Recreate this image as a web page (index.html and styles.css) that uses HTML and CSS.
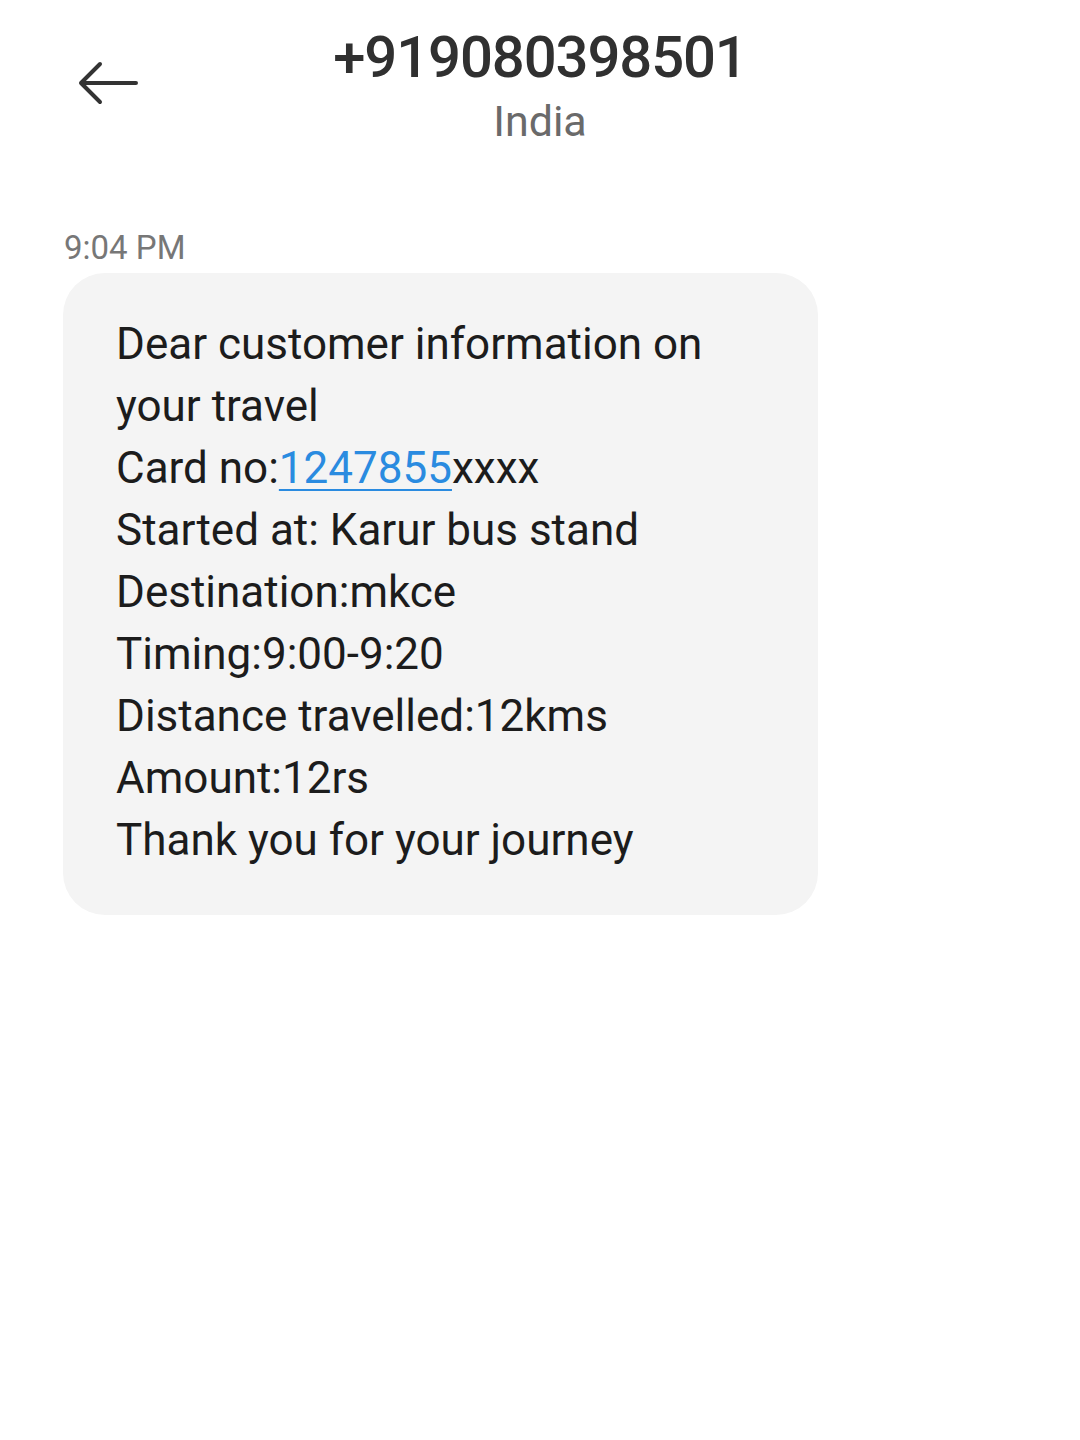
FILE: index.html
```html
<!DOCTYPE html>
<html>
<head>
<meta charset="utf-8">
<link rel="stylesheet" href="styles.css">
</head>
<body>
<header class="top">
  <div class="back">
    <svg width="60" height="44" viewBox="0 0 60 44"><path d="M58 22H3M22 3L3 22L22 41" fill="none" stroke="#333" stroke-width="4" stroke-linecap="round" stroke-linejoin="round"/></svg>
  </div>
  <div class="title">
    <div class="number">+919080398501</div>
    <div class="country">India</div>
  </div>
</header>
<main class="thread">
  <div class="time">9:04 PM</div>
  <div class="bubble">
    <p>Dear customer information on your travel</p>
    <p>Card no:<span class="link">1247855</span>xxxx</p>
    <p>Started at: Karur bus stand</p>
    <p>Destination:mkce</p>
    <p>Timing:9:00-9:20</p>
    <p>Distance travelled:12kms</p>
    <p>Amount:12rs</p>
    <p>Thank you for your journey</p>
  </div>
</main>
</body>
</html>
```
FILE: styles.css
```css
body {
  margin: 0;
  background: #fff;
  font-family: Roboto, "Noto Sans", sans-serif;
  width: 1080px;
  height: 1440px;
}
.top {
  position: relative;
  height: 200px;
}
.back {
  position: absolute;
  left: 78px;
  top: 61px;
}
.back svg { display: block; }
.title {
  display: flex;
  flex-direction: column;
  align-items: center;
  padding-top: 22px;
}
.number {
  font-size: 58px;
  font-weight: 500;
  color: #303030;
  line-height: 70px;
  letter-spacing: -1.1px;
}
.country {
  font-size: 43px;
  color: #6a6a6a;
  line-height: 52px;
  margin-top: 3px;
}
.thread {
  padding: 28px 0 0 63px;
}
.time {
  font-size: 33px;
  color: #777;
  line-height: 40px;
  padding-left: 1px;
  margin-bottom: 5px;
}
.bubble {
  width: 702px;
  background: #f4f4f4;
  border-radius: 42px;
  padding: 40px 0 44px 53px;
  box-sizing: content-box;
}
.bubble p {
  margin: 0;
  font-size: 44px;
  line-height: 62px;
  color: #1c1c1c;
  width: 600px;
}
.link {
  color: #2a8be0;
  text-decoration: underline;
  text-decoration-thickness: 2px;
  text-underline-offset: 6px;
}
```
